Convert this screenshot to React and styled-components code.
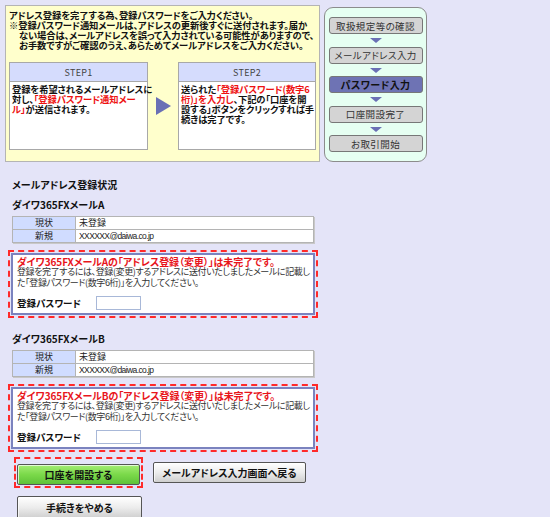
import styled, { createGlobalStyle } from "styled-components";

const GlobalStyle = createGlobalStyle`
  body {
    margin: 0;
    background: #e4e4f8;
    font-family: "Noto Sans CJK JP", "Noto Sans", sans-serif;
    font-feature-settings: "palt";
    color: #222;
  }
`;

const flowSteps = [
  "取扱規定等の確認",
  "メールアドレス入力",
  "パスワード入力",
  "口座開設完了",
  "お取引開始",
];

const mails = ["A", "B"];

function MailStatus({ name }) {
  return (
    <>
      <MailName>ダイワ365FXメール{name}</MailName>
      <StatusTable>
        <tbody>
          <tr>
            <LabelCell>現状</LabelCell>
            <ValueCell>未登録</ValueCell>
          </tr>
          <tr>
            <LabelCell>新規</LabelCell>
            <ValueCell mail>XXXXXX@daiwa.co.jp</ValueCell>
          </tr>
        </tbody>
      </StatusTable>
      <RedFrame>
        <NoticeBox>
          <AlertTitle>
            ダイワ365FXメール{name}の「アドレス登録（変更）」は未完了です。
          </AlertTitle>
          <AlertText>
            登録を完了するには、登録(変更)するアドレスに送付いたしましたメールに記載し
            <br />
            た「登録パスワード(数字6桁)」を入力してください。
          </AlertText>
          <PwRow>
            <PwLabel>登録パスワード</PwLabel>
            <PwInput type="password" />
          </PwRow>
        </NoticeBox>
      </RedFrame>
    </>
  );
}

export default function App() {
  return (
    <Page>
      <GlobalStyle />
      <TopRow>
        <InfoBox>
          <InfoText>アドレス登録を完了する為、登録パスワードをご入力ください。</InfoText>
          <InfoText hanging>
            ※登録パスワード通知メールは、アドレスの更新後すぐに送付されます。届か
            <br />
            ない場合は、メールアドレスを誤って入力されている可能性がありますので、
            <br />
            お手数ですがご確認のうえ、あらためてメールアドレスをご入力ください。
          </InfoText>
          <StepsRow>
            <StepCard>
              <StepHead>STEP1</StepHead>
              <StepBody>
                登録を希望されるメールアドレスに
                <br />
                対し、<Red>「登録パスワード通知メー</Red>
                <br />
                <Red>ル」</Red>が送信されます。
              </StepBody>
            </StepCard>
            <StepArrowCell>
              <StepArrow />
            </StepArrowCell>
            <StepCard narrow>
              <StepHead>STEP2</StepHead>
              <StepBody>
                送られた<Red>「登録パスワード(数字6</Red>
                <br />
                <Red>桁)」を入力し</Red>、下記の「口座を開
                <br />
                設する」ボタンをクリックすれば手
                <br />
                続きは完了です。
              </StepBody>
            </StepCard>
          </StepsRow>
        </InfoBox>
        <FlowPanel>
          {flowSteps.map((s, i) => (
            <FlowItem key={s}>
              {i > 0 && <FlowArrow />}
              <FlowStep active={i === 2}>{s}</FlowStep>
            </FlowItem>
          ))}
        </FlowPanel>
      </TopRow>

      <Main>
        <SectionTitle>メールアドレス登録状況</SectionTitle>
        {mails.map((m) => (
          <MailStatus key={m} name={m} />
        ))}
        <ButtonRow>
          <RedFrame tight>
            <Button green>口座を開設する</Button>
          </RedFrame>
          <Button wide>メールアドレス入力画面へ戻る</Button>
        </ButtonRow>
        <CancelRow>
          <Button tall>手続きをやめる</Button>
        </CancelRow>
      </Main>
    </Page>
  );
}

const Page = styled.div`
  width: 550px;
  padding: 5px 0 0 5px;
  box-sizing: border-box;
`;

const TopRow = styled.div`
  display: flex;
  align-items: flex-start;
  gap: 4px;
`;

const InfoBox = styled.div`
  width: 315px;
  height: 157px;
  box-sizing: border-box;
  background: #ffffcc;
  border: 1px solid #b4b4b4;
  padding: 4px 3px;
`;

const InfoText = styled.div`
  font-size: 9.3px;
  font-weight: bold;
  line-height: 10px;
  white-space: nowrap;
  color: #111;
  letter-spacing: -0.1px;
  padding-left: ${(p) => (p.hanging ? "10px" : "0")};
  text-indent: ${(p) => (p.hanging ? "-10px" : "0")};
`;

const StepsRow = styled.div`
  display: flex;
  align-items: center;
  margin-top: 12px;
`;

const StepCard = styled.div`
  width: ${(p) => (p.narrow ? "138px" : "139px")};
  height: 88px;
  box-sizing: border-box;
  border: 1px solid #a8a8a8;
  background: #fff;
`;

const StepHead = styled.div`
  height: 18px;
  border-bottom: 1px solid #a8a8a8;
  background: #d5dcfd;
  display: flex;
  align-items: center;
  justify-content: center;
  font-size: 9px;
  color: #444;
  letter-spacing: 0.3px;
`;

const StepBody = styled.div`
  padding: 2px 2px;
  font-size: 9.3px;
  font-weight: bold;
  line-height: 10px;
  white-space: nowrap;
  letter-spacing: -0.1px;
  color: #111;
`;

const Red = styled.span`
  color: #ee1111;
`;

const StepArrowCell = styled.div`
  width: 30px;
  display: flex;
  justify-content: center;
`;

const StepArrow = styled.div`
  width: 0;
  height: 0;
  border-left: 15px solid #6a70b5;
  border-top: 9px solid transparent;
  border-bottom: 9px solid transparent;
`;

const FlowPanel = styled.div`
  margin-top: 2px;
  width: 103px;
  height: 155px;
  box-sizing: border-box;
  border: 1px solid #8c8c8c;
  border-radius: 9px;
  background: #e6fff2;
  padding-top: 9px;
  display: flex;
  flex-direction: column;
  align-items: center;
`;

const FlowItem = styled.div`
  display: flex;
  flex-direction: column;
  align-items: center;
`;

const FlowArrow = styled.div`
  width: 0;
  height: 0;
  margin: 4px 0 3.5px;
  border-left: 6px solid transparent;
  border-right: 6px solid transparent;
  border-top: 5px solid #6a70b5;
`;

const FlowStep = styled.div`
  width: 94px;
  height: 17px;
  box-sizing: border-box;
  border: 1px solid #777;
  border-radius: 3px;
  background: ${(p) => (p.active ? "#6e73b4" : "#d4d4d4")};
  display: flex;
  align-items: center;
  justify-content: center;
  font-size: ${(p) => (p.active ? "10px" : "9.5px")};
  font-weight: ${(p) => (p.active ? "bold" : "normal")};
  color: ${(p) => (p.active ? "#111" : "#333")};
  letter-spacing: 0.4px;
`;

const Main = styled.div`
  padding-left: 3px;
`;

const SectionTitle = styled.div`
  margin: 17px 0 0 4px;
  font-size: 10px;
  font-weight: bold;
  line-height: 12px;
  color: #111;
`;

const MailName = styled.div`
  margin: 8px 0 0 4px;
  font-size: 10px;
  font-weight: bold;
  line-height: 12px;
  color: #111;
`;

const StatusTable = styled.table`
  margin: 5px 0 0 4px;
  width: 302px;
  border-collapse: collapse;
  border: 1px solid #9c9c9c;
  box-shadow: 1px 1px 0 #c8c8c8;
`;

const LabelCell = styled.td`
  width: 62px;
  height: 12px;
  padding: 0;
  border: 1px solid #b4b4b4;
  background: #d0dcff;
  text-align: center;
  font-size: 9px;
  line-height: 12px;
  color: #222;
`;

const ValueCell = styled.td`
  height: 12px;
  padding: 0 3px;
  border: 1px solid #b4b4b4;
  background: #fff;
  line-height: 12px;
  color: #222;
  font-family: ${(p) =>
    p.mail ? `"Liberation Sans", Arial, sans-serif` : "inherit"};
  letter-spacing: ${(p) => (p.mail ? "-0.6px" : "0")};
  font-size: ${(p) => (p.mail ? "8.5px" : "9px")};
`;

const RedFrame = styled.div`
  width: ${(p) => (p.tight ? "auto" : "310px")};
  box-sizing: border-box;
  margin-top: ${(p) => (p.tight ? "0" : "7px")};
  margin-bottom: ${(p) => (p.tight ? "0" : "15px")};
  border: 2px dashed #ff2a2a;
  padding: 1px;
`;

const NoticeBox = styled.div`
  border: 2px solid #7b83bf;
  background: #fff;
  padding: 1px 4px 3px;
`;

const AlertTitle = styled.div`
  font-size: 10px;
  font-weight: bold;
  line-height: 11px;
  color: #e8151b;
  white-space: nowrap;
  letter-spacing: -0.1px;
`;

const AlertText = styled.div`
  font-size: 9px;
  line-height: 10.5px;
  color: #333;
  white-space: nowrap;
  letter-spacing: -0.4px;
`;

const PwRow = styled.div`
  display: flex;
  align-items: center;
  margin-top: 8px;
`;

const PwLabel = styled.div`
  width: 79px;
  font-size: 9.5px;
  font-weight: bold;
  color: #111;
`;

const PwInput = styled.input`
  width: 45px;
  height: 14px;
  box-sizing: border-box;
  border: 1px solid #a8b8d8;
  background: #fff;
  padding: 0;
  margin: 0;
`;

const ButtonRow = styled.div`
  display: flex;
  align-items: center;
  gap: 10px;
  margin-top: -10px;
  padding-left: 6px;
`;

const CancelRow = styled.div`
  display: flex;
  margin-top: 8px;
  padding-left: 9px;
`;

const Button = styled.button`
  width: ${(p) => (p.wide ? "153px" : p.tall ? "125px" : "123px")};
  height: ${(p) => (p.tall ? "23px" : "21px")};
  border: 1px solid #555;
  border-radius: 2px;
  padding: 0;
  background: ${(p) =>
    p.green
      ? "linear-gradient(#a4ec74, #7bd94a 50%, #5fc338)"
      : "linear-gradient(#ffffff, #ececec 50%, #cfcfcf)"};
  box-shadow: inset 1px 1px 0 rgba(255, 255, 255, 0.7);
  font-family: "Noto Sans CJK JP", sans-serif;
  font-feature-settings: "palt";
  font-size: 10px;
  font-weight: bold;
  color: #111;
  cursor: pointer;
`;
